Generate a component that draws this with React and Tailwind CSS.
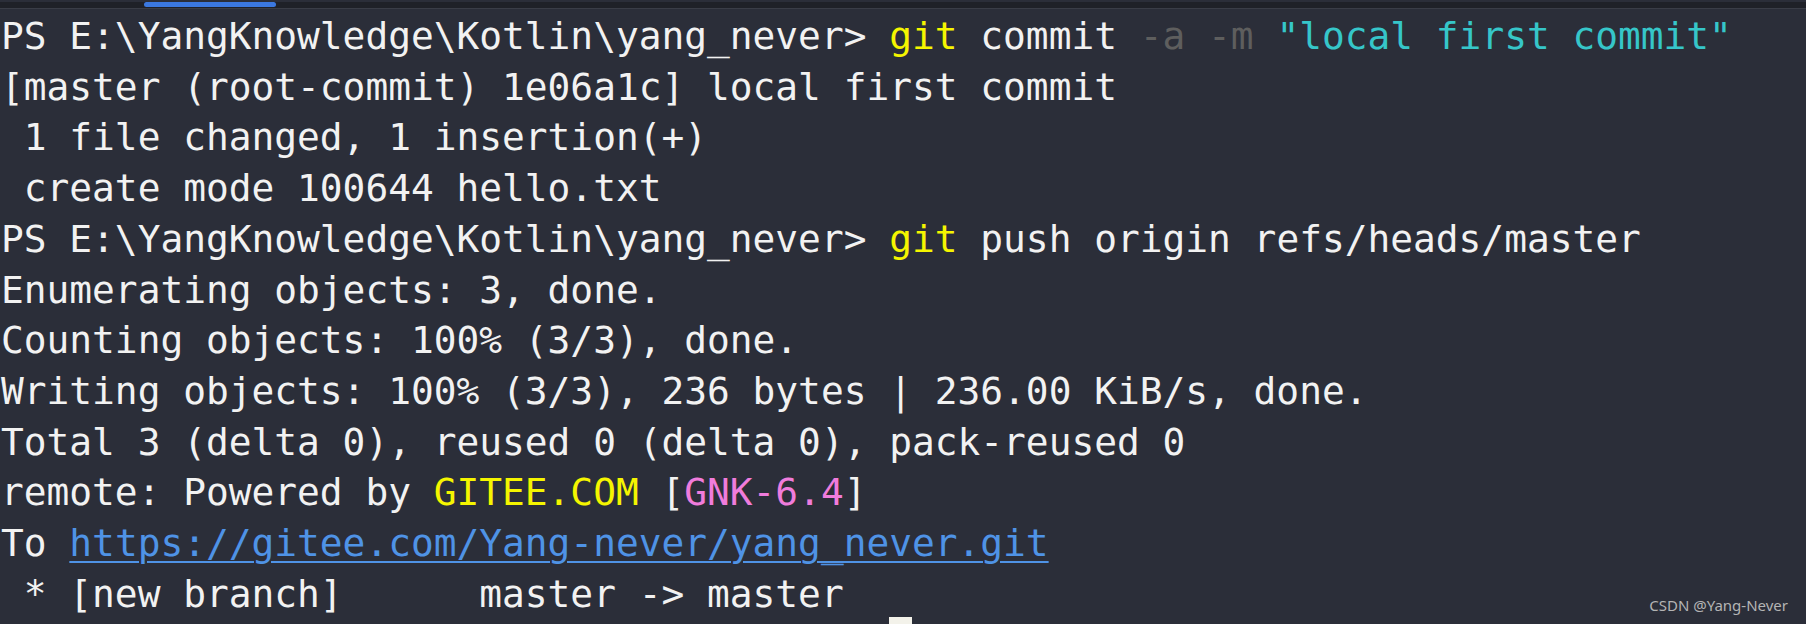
const PROMPT = "PS E:\\YangKnowledge\\Kotlin\\yang_never> ";

// each line is a list of [colour, text] runs
const lines = [
  [["w", PROMPT], ["y", "git"], ["w", " commit "], ["g", "-a -m"], ["w", " "], ["c", "\"local first commit\""]],
  [["w", "[master (root-commit) 1e06a1c] local first commit"]],
  [["w", " 1 file changed, 1 insertion(+)"]],
  [["w", " create mode 100644 hello.txt"]],
  [["w", PROMPT], ["y", "git"], ["w", " push origin refs/heads/master"]],
  [["w", "Enumerating objects: 3, done."]],
  [["w", "Counting objects: 100% (3/3), done."]],
  [["w", "Writing objects: 100% (3/3), 236 bytes | 236.00 KiB/s, done."]],
  [["w", "Total 3 (delta 0), reused 0 (delta 0), pack-reused 0"]],
  [["w", "remote: Powered by "], ["y", "GITEE.COM"], ["w", " ["], ["p", "GNK-6.4"], ["w", "]"]],
  [["w", "To "], ["l", "https://gitee.com/Yang-never/yang_never.git"]],
  [["w", " * [new branch]      master -> master"]],
];

const colours = {
  w: "text-[#f2f2f2]",
  y: "text-[#f5f500]",
  g: "text-[#5e5e5e]",
  c: "text-[#36c6c9]",
  p: "text-[#f07cdc]",
  l: "text-[#4f93e6] underline decoration-2 underline-offset-[5px]",
};

export default function App() {
  return (
    <div className="relative w-[1806px] h-[624px] overflow-hidden bg-[#2b2e39]">
      {/* tab strip */}
      <div className="h-[7px] bg-[#1f2128] border-b border-[#3a3d47] pl-[144px]">
        <div className="mt-[2px] w-[132px] h-[5px] rounded-full bg-[#3b78e0]" />
      </div>

      <div
        className="pt-[2px] pl-[1px] whitespace-pre text-[37.85px] leading-[50.7px]"
        style={{ fontFamily: '"DejaVu Sans Mono", "Liberation Mono", monospace' }}
      >
        {lines.map((runs, i) => (
          <div key={i}>
            {runs.map(([c, t], j) => (
              <span key={j} className={colours[c]}>{t}</span>
            ))}
          </div>
        ))}
        <div className="-mt-[2px] ml-[888px] w-[23px] h-[10px] bg-[#f3f2ea]" />
      </div>

      <div
        className="absolute right-[18px] bottom-[8px] text-[15px] text-[#b4b4b4]"
        style={{ fontFamily: '"Noto Sans", "Liberation Sans", sans-serif' }}
      >
        CSDN @Yang-Never
      </div>
    </div>
  );
}
